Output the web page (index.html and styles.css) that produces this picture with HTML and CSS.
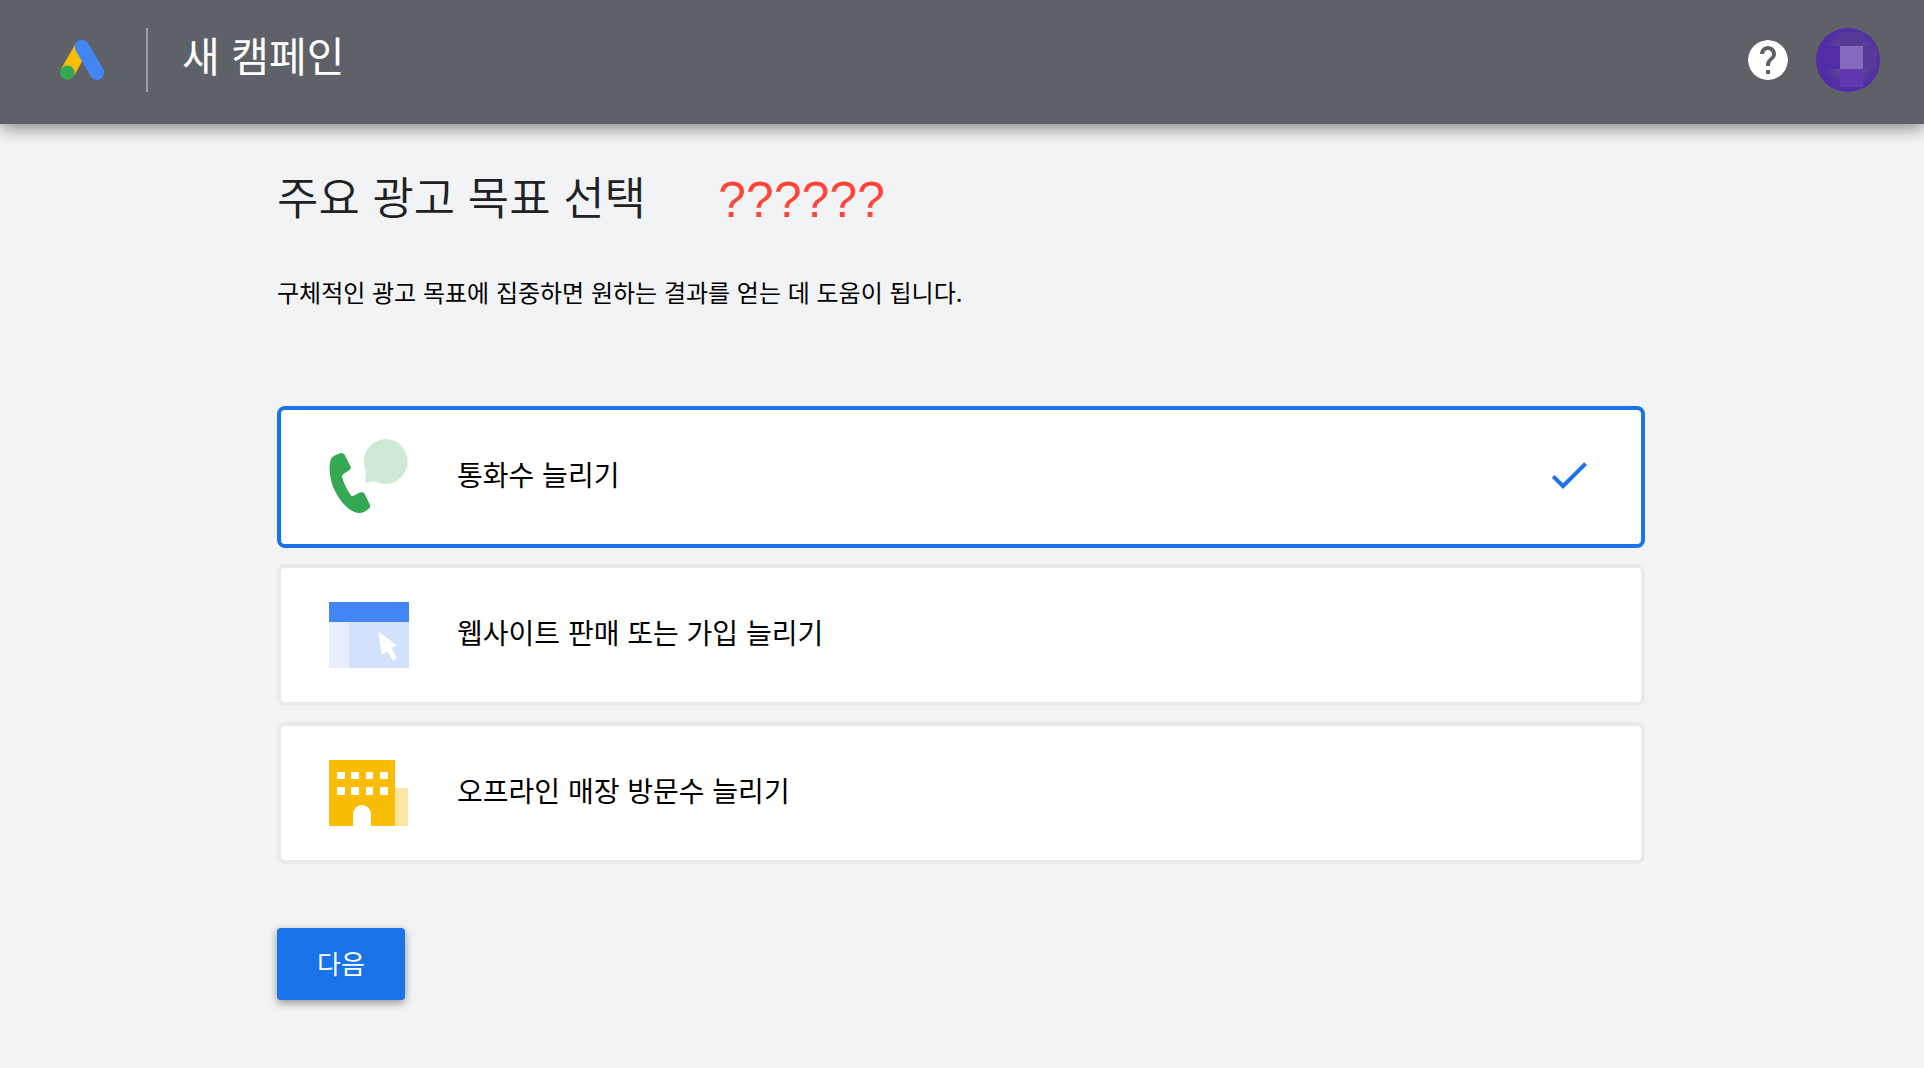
FILE: index.html
```html
<!DOCTYPE html>
<html lang="ko">

<head>
  <meta charset="UTF-8">
  <meta name="viewport" content="width=device-width, initial-scale=1.0">
  <title>새 캠페인</title>
  <link rel="stylesheet" href="styles.css">
</head>

<body>
  <header class="topbar">
    <svg class="logo" viewBox="0 0 44 40" aria-hidden="true">
      <path d="M22 7L7.3 32.7" stroke="#fbbc04" stroke-width="14.6" />
      <path d="M22 7L37 32.7" stroke="#4285f4" stroke-width="14.4" stroke-linecap="round" />
      <circle cx="7.3" cy="32.7" r="7.3" fill="#34a853" />
    </svg>
    <span class="divider"></span>
    <span class="topbar-title">새 캠페인</span>
    <button class="icon-button help" type="button" aria-label="도움말">
      <svg viewBox="2 2 20 20" aria-hidden="true">
        <path fill="#fff" d="M12 2C6.48 2 2 6.48 2 12s4.480 10 10 10 10-4.480 10-10S17.520 2 12 2zm1 17h-2v-2h2v2zm2.070-7.750l-.9.920C13.450 12.900 13 13.500 13 15h-2v-.5c0-1.100.450-2.100 1.170-2.830l1.240-1.260c.370-.360.590-.860.590-1.410 0-1.100-.9-2-2-2s-2 .9-2 2H8c0-2.210 1.790-4 4-4s4 1.790 4 4c0 .880-.360 1.680-.930 2.250z" />
      </svg>
    </button>
    <button class="icon-button avatar" type="button" aria-label="계정">
      <svg viewBox="0 0 64 64" aria-hidden="true">
        <defs>
          <radialGradient id="corner" gradientUnits="userSpaceOnUse" cx="35" cy="30" r="32">
            <stop offset=".5" stop-color="#5d4a8c" />
            <stop offset=".9" stop-color="#512da8" />
          </radialGradient>
        </defs>
        <rect width="64" height="64" fill="#512da8" />
        <path fill="url(#corner)" d="M1 0h23v18H1zM47 0h17v18H47zM1 41h23v23H1zM47 41h17v23H47z" />
        <path fill="#573a98" d="M24 4h23v14H24zM47 18h14v23H47z" />
        <path fill="#6039b0" d="M24 41h23v18H24z" />
        <path fill="#8469be" d="M24 18h23v23H24z" />
      </svg>
    </button>
  </header>

  <main class="content">
    <div class="heading">
      <h1 id="goal-title">주요 광고 목표 선택</h1>
      <span class="note">??????</span>
    </div>
    <p class="lead">구체적인 광고 목표에 집중하면 원하는 결과를 얻는 데 도움이 됩니다.</p>

    <form>
      <div class="options" role="radiogroup" aria-labelledby="goal-title">
        <label class="option" for="goal-calls">
          <input id="goal-calls" type="radio" name="goal" value="calls" checked>
          <svg class="option-icon" viewBox="0 0 80 80" aria-hidden="true">
            <path fill="#ceead6" d="M57 2a22.500 22.500 0 1 1-12 42l-9 2 1-12A22.500 22.500 0 0 1 57 2z" />
            <path fill="#34a853" d="M2 22C3 19 9 17 12 16q2-.5 3.500 1.500l6 12q1 2-1 3.500l-6 4q-2 1.500-1.500 3C15 47 18 53 22 58.500q1 1 2 .5l7-3.500q3-1 4.500 1l5.500 11.500q1 2-1 3.500C37 74 33 76.500 29 76 19 74 11 64 6 54 1 44-1 31 2 22z" />
          </svg>
          <span class="option-text">통화수 늘리기</span>
          <svg class="check" viewBox="0 0 24 24" aria-hidden="true">
            <path fill="#1a73e8" d="M9 16.170L4.830 12l-1.420 1.410L9 19 21 7l-1.410-1.410z" />
          </svg>
        </label>
        <label class="option" for="goal-web">
          <input id="goal-web" type="radio" name="goal" value="web">
          <svg class="option-icon" viewBox="0 0 80 80" aria-hidden="true">
            <path fill="#4285f4" d="M0 7h80v20H0z" />
            <path fill="#e8eefd" d="M0 27h20v46H0z" />
            <path fill="#d2e1fc" d="M20 27h60v46H20z" />
            <path fill="#fff" d="M49.500 36.500l18.500 14-5.500 2.500 5.500 10-4 3-5.500-9.500-6 3.500z" />
          </svg>
          <span class="option-text">웹사이트 판매 또는 가입 늘리기</span>
          <svg class="check" viewBox="0 0 24 24" aria-hidden="true">
            <path fill="#1a73e8" d="M9 16.170L4.830 12l-1.420 1.410L9 19 21 7l-1.410-1.410z" />
          </svg>
        </label>
        <label class="option" for="goal-store">
          <input id="goal-store" type="radio" name="goal" value="store">
          <svg class="option-icon" viewBox="0 0 80 80" aria-hidden="true">
            <path fill="#fde5a6" d="M66 35h13v38H66z" />
            <path fill="#fbbc04" d="M0 7h66v66H0z" />
            <path fill="#fff" d="M8 19h8v7H8zM22 19h8v7h-8zM37 19h7v7h-7zM51 19h8v7h-8zM8 34h8v8H8zM22 34h8v8h-8zM37 34h7v8h-7zM51 34h8v8h-8z" />
            <path fill="#fff" d="M24 73V61a9 9 0 0 1 18 0v12z" />
          </svg>
          <span class="option-text">오프라인 매장 방문수 늘리기</span>
          <svg class="check" viewBox="0 0 24 24" aria-hidden="true">
            <path fill="#1a73e8" d="M9 16.170L4.830 12l-1.420 1.410L9 19 21 7l-1.410-1.410z" />
          </svg>
        </label>
      </div>
      <button class="next" type="button">다음</button>
    </form>
  </main>
</body>

</html>
```

FILE: styles.css
```css
* {
  box-sizing: border-box;
}

body {
  margin: 0;
  min-height: 100vh;
  background-color: #f1f3f4;
  color: #000;
  font-family: "Noto Sans CJK KR", sans-serif;
}

.topbar {
  display: flex;
  align-items: center;
  padding: 28px 44px 32px 60px;
  background-color: #5f6168;
  box-shadow: 0 4px 16px rgba(0, 0, 0, .45);
}

.logo {
  width: 44px;
  height: 40px;
  fill: none;
}

.divider {
  width: 2px;
  height: 64px;
  margin: 0 34px 0 42px;
  background-color: #9b9da3;
}

.topbar-title {
  flex: 1;
  padding-bottom: 12px;
  color: #fff;
  font-size: 41px;
  line-height: 52px;
}

.icon-button {
  padding: 0;
  border: 0;
  border-radius: 50%;
  overflow: hidden;
  background: none;
  cursor: pointer;
}

.icon-button svg {
  display: block;
  width: 100%;
  height: 100%;
}

.help {
  width: 40px;
  height: 40px;
  margin-right: 28px;
}

.avatar {
  width: 64px;
  height: 64px;
}

.content {
  max-width: 1418px;
  margin: 0 auto;
  padding: 38px 26px 68px 24px;
}

.heading {
  display: flex;
  align-items: flex-start;
  gap: 72px;
}

h1 {
  margin: 0;
  color: #202124;
  font-size: 45px;
  font-weight: 350;
  line-height: 68px;
}

.note {
  padding-top: 4px;
  color: #ff453a;
  font-family: "Liberation Sans", sans-serif;
  font-size: 50px;
  line-height: 68px;
}

.lead {
  margin: 38px 0 94px;
  font-size: 24px;
  line-height: 40px;
}

.options {
  display: flex;
  flex-direction: column;
  gap: 16px;
}

.option {
  display: flex;
  align-items: center;
  gap: 48px;
  padding: 27px 48px;
  border: 4px solid #e8eaed;
  border-radius: 8px;
  background-color: #fff;
  cursor: pointer;
}

.option:has(input:checked) {
  border-color: #1a73e8;
}

.option input {
  position: absolute;
  margin: 0;
  opacity: 0;
}

.option-icon {
  width: 80px;
  height: 80px;
}

.option-text {
  flex: 1;
  padding-bottom: 6px;
  font-size: 28px;
  line-height: 40px;
}

.check {
  width: 48px;
  height: 48px;
  margin-bottom: 4px;
  visibility: hidden;
}

.option input:checked ~ .check {
  visibility: visible;
}

.next {
  display: block;
  margin-top: 64px;
  padding: 15px 40px 17px;
  border: 0;
  border-radius: 4px;
  background-color: #1a73e8;
  box-shadow: 0 3px 8px rgba(0, 0, 0, .4);
  color: #fff;
  font-family: inherit;
  font-size: 26px;
  line-height: 40px;
  cursor: pointer;
}
```
